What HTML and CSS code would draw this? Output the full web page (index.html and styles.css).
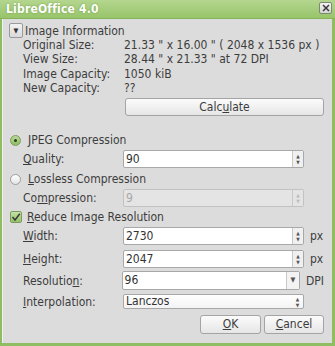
FILE: index.html
```html
<!DOCTYPE html>
<html>
<head>
<meta charset="utf-8">
<link rel="stylesheet" href="styles.css">
</head>
<body>
<div class="window">
  <div class="titlebar">
    <span class="title">LibreOffice 4.0</span>
    <span class="close"><svg width="8" height="8" viewBox="0 0 8 8"><path d="M1 1 L7 7 M7 1 L1 7" stroke="#3a3a3a" stroke-width="1.5"/></svg></span>
  </div>
  <div class="content">
    <div class="expander-row">
      <span class="expander">▼</span>
      <span>Image Information</span>
    </div>
    <div class="info">
      <span>Original Size:</span><span>21.33 " x 16.00 " ( 2048 x 1536 px )</span>
      <span>View Size:</span><span>28.44 " x 21.33 " at 72 DPI</span>
      <span>Image Capacity:</span><span>1050 kiB</span>
      <span>New Capacity:</span><span>??</span>
    </div>
    <div class="calc-row"><button class="btn calc">Calc<u>u</u>late</button></div>

    <div class="option jpeg"><span class="radio checked"></span><span>JPEG Compression</span></div>
    <div class="field quality">
      <span class="label"><u>Q</u>uality:</span>
      <div class="spin"><span class="val">90</span><span class="arrows">▲<br>▼</span></div>
    </div>
    <div class="option lossless"><span class="radio"></span><span><u>L</u>ossless Compression</span></div>
    <div class="field compression">
      <span class="label">Co<u>m</u>pression:</span>
      <div class="spin disabled"><span class="val">9</span><span class="arrows">▲<br>▼</span></div>
    </div>
    <div class="option reduce"><span class="check"><svg width="10" height="10" viewBox="0 0 10 10"><path d="M1.5 5 L4 8 L8.8 1.8" fill="none" stroke="#3a3a3a" stroke-width="1.5"/></svg></span><span><u>R</u>educe Image Resolution</span></div>
    <div class="field width">
      <span class="label"><u>W</u>idth:</span>
      <div class="spin"><span class="val">2730</span><span class="arrows">▲<br>▼</span></div>
      <span class="unit">px</span>
    </div>
    <div class="field height">
      <span class="label"><u>H</u>eight:</span>
      <div class="spin"><span class="val">2047</span><span class="arrows">▲<br>▼</span></div>
      <span class="unit">px</span>
    </div>
    <div class="field resolution">
      <span class="label">Resolutio<u>n</u>:</span>
      <div class="spin combo"><span class="val">96</span><span class="drop">▼</span></div>
      <span class="unit">DPI</span>
    </div>
    <div class="field interpolation">
      <span class="label"><u>I</u>nterpolation:</span>
      <div class="spin list"><span class="val">Lanczos</span><span class="arrows">▲<br>▼</span></div>
    </div>
    <div class="buttons">
      <button class="btn ok"><u>O</u>K</button>
      <button class="btn cancel"><u>C</u>ancel</button>
    </div>
  </div>
</div>
</body>
</html>
```
FILE: styles.css
```css
* { box-sizing: border-box; }
html, body { margin: 0; padding: 0; }
body {
  width: 335px;
  height: 346px;
  overflow: hidden;
  font-family: "DejaVu Sans Condensed", "DejaVu Sans", sans-serif;
  font-size: 12px;
  color: #3c3c3c;
}
u { text-decoration: underline; text-underline-offset: 1px; }
.window {
  width: 335px;
  height: 346px;
  background: #dcdcdc;
  border-left: 2px solid #8fbd62;
  border-right: 3px solid #8fbd62;
  border-bottom: 3px solid #8fbd62;
  display: flex;
  flex-direction: column;
}
.titlebar {
  height: 19px;
  margin: 0 -3px 0 -2px;
  background: linear-gradient(#b4d68f, #98c46a);
  border-bottom: 1px solid #86b158;
  display: flex;
  align-items: center;
  justify-content: space-between;
  padding: 0 3px 0 6px;
}
.title {
  color: #fff;
  font-weight: bold;
  font-size: 12px;
  text-shadow: 0 0 2px #6d9a45;
  letter-spacing: 0.2px;
}
.close {
  width: 13px;
  height: 12px;
  margin-top: -2px;
  border: 1px solid #7d8a72;
  border-radius: 2px;
  background: linear-gradient(#f4f4f4, #d4d4d4);
  display: flex;
  align-items: center;
  justify-content: center;
}
.content {
  flex: 1;
  border-left: 1px solid #f0f0f0;
  padding: 4px 8px 0 6px;
}
.expander-row {
  display: flex;
  align-items: center;
  height: 15px;
  gap: 2px;
}
.expander {
  width: 14px;
  height: 15px;
  border: 1px solid #9a9a9a;
  border-radius: 2px;
  background: linear-gradient(#f2f2f2, #dadada);
  font-size: 7px;
  display: flex;
  align-items: center;
  justify-content: center;
  color: #333;
}
.info {
  display: grid;
  grid-template-columns: 101px 1fr;
  grid-auto-rows: 14.3px;
  line-height: 14px;
  padding-left: 14px;
}
.calc-row {
  display: flex;
  padding-left: 116px;
  margin-top: 3px;
}
.btn {
  font-family: inherit;
  font-size: 12px;
  color: #3c3c3c;
  height: 19px;
  padding: 0;
  border: 1px solid #a4a4a4;
  border-radius: 3px;
  background: linear-gradient(#fbfbfb, #e6e6e6);
  line-height: 17px;
}
.calc { width: 200px; height: 18px; line-height: 16px; }
.option {
  display: flex;
  align-items: center;
  height: 14px;
  gap: 7px;
}
.jpeg { margin-top: 17px; }
.lossless { margin-top: 4px; }
.reduce { margin-top: 3px; gap: 5px; }
.radio {
  width: 11px;
  height: 11px;
  margin-left: 1px;
  border-radius: 50%;
  border: 1px solid #9e9e9e;
  background: linear-gradient(#ffffff, #e4e4e4);
  position: relative;
}
.radio.checked {
  background: linear-gradient(#b8d89a, #8fbd62);
  border-color: #7c9c5c;
}
.radio.checked::after {
  content: "";
  position: absolute;
  left: 3px; top: 3px;
  width: 3px; height: 3px;
  border-radius: 50%;
  background: #2d3d20;
}
.check {
  width: 12px;
  height: 12px;
  margin-left: 1px;
  border: 1px solid #7c9c5c;
  border-radius: 2px;
  background: linear-gradient(#c3e0a6, #94c168);
  display: flex;
  align-items: center;
  justify-content: center;
}
.field {
  display: flex;
  align-items: center;
  height: 18px;
}
.quality { margin-top: 3px; }
.compression { margin-top: 3px; }
.width { margin-top: 3px; }
.height { margin-top: 5px; }
.resolution { margin-top: 3px; height: 19px; }
.interpolation { margin-top: 2px; height: 19px; }
.label {
  width: 114px;
  padding-left: 14px;
}
.spin {
  width: 181px;
  height: 18px;
  border: 1px solid #a8a8a8;
  border-radius: 2px;
  background: #fff;
  display: flex;
  align-items: stretch;
}
.spin .val {
  flex: 1;
  padding-left: 2px;
  line-height: 16px;
  color: #333;
}
.spin .arrows {
  width: 11px;
  border-left: 1px solid #c8c8c8;
  background: #f0f0f0;
  font-size: 5px;
  line-height: 6px;
  text-align: center;
  color: #555;
  padding-top: 2px;
}
.spin.disabled { background: #e4e4e4; border-color: #c2c2c2; }
.spin.disabled .val { color: #a8a8a8; }
.spin.disabled .arrows { color: #bbb; background: #e4e4e4; }
.spin.combo { height: 19px; }
.spin.combo .val { line-height: 17px; }
.spin.combo .drop {
  width: 13px;
  border-left: 1px solid #c8c8c8;
  background: #f3f3f3;
  font-size: 7px;
  line-height: 17px;
  text-align: center;
  color: #555;
}
.spin.list { height: 15px; background: linear-gradient(#ffffff, #f3f3f3); }
.spin.list .val { line-height: 13px; }
.spin.list .arrows { padding-top: 1px; background: transparent; border-left: none; }
.unit { padding-left: 6px; color: #3c3c3c; }
.buttons {
  display: flex;
  justify-content: flex-end;
  gap: 3px;
  margin-top: 4px;
}
.ok { width: 61px; }
.cancel { width: 60px; }
```
